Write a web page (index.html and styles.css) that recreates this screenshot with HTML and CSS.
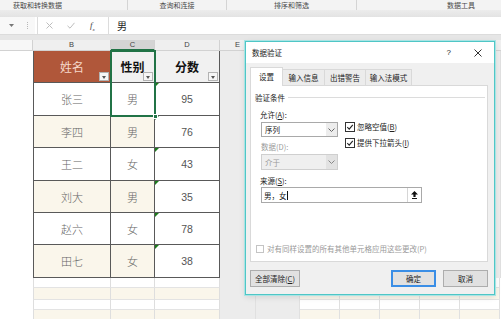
FILE: index.html
```html
<!DOCTYPE html>
<html lang="zh">
<head>
<meta charset="utf-8">
<title>数据验证</title>
<link rel="stylesheet" href="styles.css">
</head>
<body>
<div class="app">
  <div class="ribbon">
    <div class="grp g1">获取和转换数据</div>
    <div class="grp g2">查询和连接</div>
    <div class="grp g3">排序和筛选</div>
    <div class="grp g4">数据工具</div>
  </div>
  <div class="band"></div>
  <div class="fbar">
    <div class="fb-left">
      <svg class="nb-arrow" width="5" height="3" viewBox="0 0 5 3"><polygon points="0,0 5,0 2.5,3" fill="#777"/></svg>
      <span class="dots"></span>
    </div>
    <div class="fb-btns">
      <svg width="7" height="7" viewBox="0 0 7 7"><path d="M0.5 0.5L6.5 6.5M6.5 0.5L0.5 6.5" stroke="#bdbdbd" stroke-width="1" fill="none"/></svg>
      <svg width="8" height="7" viewBox="0 0 8 7"><polyline points="0.5,3.8 3,6.2 7.5,0.8" stroke="#bdbdbd" stroke-width="1" fill="none"/></svg>
      <span class="fx">f<sub>x</sub></span>
    </div>
    <div class="fb-input">男</div>
  </div>
  <div class="gap"></div>
  <div class="sheet">
    <div class="colhdr">
      <div class="c ca"></div>
      <div class="c cb">B</div>
      <div class="c cc sel">C</div>
      <div class="c cd">D</div>
      <div class="c ce">E</div>
      <div class="c cg"></div>
      <div class="c cr"></div>
    </div>

    <div class="row h32">
      <div class="c ca"></div>
      <div class="c cb t hb">姓名<span class="flt"></span></div>
      <div class="c cc t hc">性别<span class="flt"></span></div>
      <div class="c cd t hc">分数<span class="flt"></span></div>
      <div class="c ce gray"></div><div class="c cg gray"></div><div class="c cr gray"></div>
    </div>
    <div class="row h33">
      <div class="c ca"></div>
      <div class="c cb t nm">张三</div>
      <div class="c cc t nm">男</div>
      <div class="c cd t num tri">95</div>
      <div class="c ce gray"></div><div class="c cg gray"></div><div class="c cr gray"></div>
    </div>
    <div class="row h32">
      <div class="c ca"></div>
      <div class="c cb t nm alt">李四</div>
      <div class="c cc t nm alt">男</div>
      <div class="c cd t num tri">76</div>
      <div class="c ce gray"></div><div class="c cg gray"></div><div class="c cr gray"></div>
    </div>
    <div class="row h33">
      <div class="c ca"></div>
      <div class="c cb t nm">王二</div>
      <div class="c cc t nm">女</div>
      <div class="c cd t num tri">43</div>
      <div class="c ce gray"></div><div class="c cg gray"></div><div class="c cr gray"></div>
    </div>
    <div class="row h32">
      <div class="c ca"></div>
      <div class="c cb t nm alt">刘大</div>
      <div class="c cc t nm alt">男</div>
      <div class="c cd t num tri">35</div>
      <div class="c ce gray"></div><div class="c cg gray"></div><div class="c cr gray"></div>
    </div>
    <div class="row h32">
      <div class="c ca"></div>
      <div class="c cb t nm">赵六</div>
      <div class="c cc t nm">女</div>
      <div class="c cd t num tri">78</div>
      <div class="c ce gray"></div><div class="c cg gray"></div><div class="c cr gray"></div>
    </div>
    <div class="row h33">
      <div class="c ca"></div>
      <div class="c cb t nm alt">田七</div>
      <div class="c cc t nm alt">女</div>
      <div class="c cd t num tri">38</div>
      <div class="c ce gray"></div><div class="c cg gray"></div><div class="c cr gray"></div>
    </div>

    <div class="row h10 er">
      <div class="c ca"></div><div class="c cb g"></div><div class="c cc g"></div><div class="c cd g"></div>
      <div class="c ce gray"></div><div class="c cg gray"></div>
      <div class="c cr"><span class="rc"></span><span class="rc"></span><span class="rc"></span><span class="rc"></span><span class="rc"></span></div>
    </div>
    <div class="row h12 er cream">
      <div class="c ca"></div><div class="c cb g"></div><div class="c cc g"></div><div class="c cd g"></div>
      <div class="c ce gray"></div><div class="c cg gray"></div>
      <div class="c cr"><span class="rc"></span><span class="rc"></span><span class="rc"></span><span class="rc"></span><span class="rc"></span></div>
    </div>
    <div class="row h10 er">
      <div class="c ca"></div><div class="c cb g"></div><div class="c cc g"></div><div class="c cd g"></div>
      <div class="c ce gray"></div><div class="c cg gray"></div>
      <div class="c cr"><span class="rc"></span><span class="rc"></span><span class="rc"></span><span class="rc"></span><span class="rc"></span></div>
    </div>
    <div class="row h10 er cream">
      <div class="c ca"></div><div class="c cb g"></div><div class="c cc g"></div><div class="c cd g"></div>
      <div class="c ce gray"></div><div class="c cg gray"></div>
      <div class="c cr"><span class="rc"></span><span class="rc"></span><span class="rc"></span><span class="rc"></span><span class="rc"></span></div>
    </div>

    <div class="selbox"><span class="handle"></span></div>
  </div>

  <div class="dialog">
    <div class="dlg-title">
      <span class="ttl">数据验证</span>
      <span class="q">?</span>
      <svg class="close" width="8" height="8" viewBox="0 0 8 8"><path d="M0.5 0.5L7.5 7.5M7.5 0.5L0.5 7.5" stroke="#333" stroke-width="1" fill="none"/></svg>
    </div>
    <div class="dlg-body">
      <div class="tabs">
        <div class="tab active">设置</div>
        <div class="tab w42">输入信息</div>
        <div class="tab w41">出错警告</div>
        <div class="tab w46">输入法模式</div>
      </div>
      <div class="panel">
        <div class="sec"><span>验证条件</span><span class="rule"></span></div>
        <div class="form">
          <div class="lbl l1">允许(<u>A</u>):</div>
          <div class="row2">
            <div class="col-left">
              <div class="select">
                <span class="sv">序列</span>
                <span class="dd"><svg width="7" height="4" viewBox="0 0 7 4"><polyline points="0.5,0.5 3.5,3.5 6.5,0.5" fill="none" stroke="#666" stroke-width="1"/></svg></span>
              </div>
              <div class="lbl dis l2">数据(D):</div>
              <div class="select disabled">
                <span class="sv">介于</span>
                <span class="dd"><svg width="7" height="4" viewBox="0 0 7 4"><polyline points="0.5,0.5 3.5,3.5 6.5,0.5" fill="none" stroke="#888" stroke-width="1"/></svg></span>
              </div>
            </div>
            <div class="col-right">
              <div class="chk"><span class="box"><svg width="8" height="8" viewBox="0 0 8 8"><polyline points="1.3,4.2 3.2,6.1 6.8,1.8" fill="none" stroke="#222" stroke-width="1.1"/></svg></span>忽略空值(<u>B</u>)</div>
              <div class="chk"><span class="box"><svg width="8" height="8" viewBox="0 0 8 8"><polyline points="1.3,4.2 3.2,6.1 6.8,1.8" fill="none" stroke="#222" stroke-width="1.1"/></svg></span>提供下拉箭头(<u>I</u>)</div>
            </div>
          </div>
          <div class="lbl l3">来源(<u>S</u>):</div>
          <div class="source">
            <span class="val">男，女</span><span class="caret"></span>
            <span class="pick"><svg width="7" height="8" viewBox="0 0 7 8"><polygon points="3.5,0 7,3.5 4.6,3.5 4.6,6 2.4,6 2.4,3.5 0,3.5" fill="#111"/><rect x="1" y="7" width="5" height="1" fill="#111"/></svg></span>
          </div>
        </div>
        <div class="apply"><span class="box dbox"></span>对有同样设置的所有其他单元格应用这些更改(P)</div>
      </div>
      <div class="footer">
        <button class="btn wide">全部清除(<u>C</u>)</button>
        <span class="spacer"></span>
        <button class="btn primary">确定</button>
        <button class="btn">取消</button>
      </div>
    </div>
  </div>
</div>
</body>
</html>
```
FILE: styles.css
```css
* { box-sizing: border-box; margin: 0; padding: 0; }
html, body { width: 501px; height: 319px; overflow: hidden; }
body {
  background: #fff;
  font-family: "Noto Sans CJK SC", "Noto Sans", sans-serif;
  color: #333;
}
.app { position: relative; width: 501px; height: 319px; overflow: hidden; }

/* ribbon group labels */
.ribbon {
  display: flex;
  height: 10px;
  background: #f3f3f3;
  font-size: 7px;
  line-height: 10px;
  color: #4a4a4a;
}
.grp { border-right: 1px solid #d4d4d4; white-space: nowrap; }
.g1 { width: 128px; padding-left: 13px; }
.g2 { width: 99px; text-align: center; }
.g3 { width: 130px; text-align: center; }
.g4 { flex: 1; border-right: none; padding-left: 90px; }
.band { height: 7px; background: linear-gradient(#ececec, #e3e3e3); }

/* formula bar */
.fbar { display: flex; height: 17px; background: #fff; }
.fb-left {
  width: 35px;
  background: #f8f8f8;
  display: flex;
  align-items: center;
  padding-left: 9px;
}
.dots {
  margin-left: 13px;
  width: 1px;
  height: 7px;
  border-left: 1px dotted #b8b8b8;
}
.fb-btns {
  width: 72px;
  margin-left: 2px;
  border-left: 1px solid #dcdcdc;
  border-right: 1px solid #dcdcdc;
  display: flex;
  align-items: center;
  padding-left: 8px;
  gap: 14px;
}
.fx {
  font-family: "Liberation Serif", serif;
  font-style: italic;
  font-size: 9px;
  color: #444;
  margin-left: 1px;
}
.fx sub { font-size: 5px; }
.fb-input {
  flex: 1;
  font-size: 10px;
  line-height: 17px;
  padding-left: 8px;
  color: #222;
}
.gap { height: 6px; background: #e6e6e6; border-top: 1px solid #dcdcdc; }

/* sheet */
.sheet { position: relative; }
.colhdr, .row { display: flex; }
.c { flex: none; position: relative; }
.ca { width: 33px; }
.cb { width: 78px; }
.cc { width: 44px; }
.cd { width: 65px; }
.ce { width: 36px; }
.cg { width: 44px; }
.cr { flex: 1; display: flex; }

.colhdr {
  height: 11px;
  background: #efefef;
  border-bottom: 1px solid #d2d2d2;
  font-family: "Liberation Sans", sans-serif;
  font-size: 7.5px;
  line-height: 10px;
  color: #444;
  text-align: center;
}
.colhdr .c { border-right: 1px solid #d2d2d2; }
.colhdr .ca { background: #f7f7f7; }
.colhdr .cc.sel { background: #d4d4d4; border-bottom: 2px solid #217346; height: 11px; }
.colhdr .cr { border-right: none; }

.h32 { height: 32px; }
.h33 { height: 33px; }
.h10 { height: 10px; }
.h12 { height: 12px; }

.t {
  border-right: 1px solid #595959;
  border-bottom: 1px solid #595959;
  display: flex;
  align-items: center;
  justify-content: center;
  background: #fff;
}
.cb.t { border-left: 1px solid #595959; }
.hb { background: #b0573a; color: #f6d9cb; font-size: 12px; }
.hc { background: #f1f1f1; color: #111; font-size: 12px; font-weight: bold; }
.nm { font-size: 11px; color: #666; font-weight: 300; }
.num { font-family: "Liberation Sans", sans-serif; font-size: 10.5px; color: #555; }
.alt { background: #faf6eb; }
.gray { background: #ececec; border-right: 1px solid #e0e0e0; }

.flt {
  position: absolute;
  right: 1px;
  bottom: 1px;
  width: 10px;
  height: 9px;
  background: #f6f6f6;
  border: 1px solid #b3b3b3;
}
.flt::after {
  content: "";
  position: absolute;
  left: 2px;
  top: 3px;
  border-left: 2.5px solid transparent;
  border-right: 2.5px solid transparent;
  border-top: 3px solid #555;
}
.tri::before {
  content: "";
  position: absolute;
  left: 0;
  top: 0;
  border-top: 4px solid #1d7a1d;
  border-right: 4px solid transparent;
}

.er .g { border-right: 1px solid #dedede; border-bottom: 1px solid #e3e3e3; }
.er .cb { border-left: 1px solid #dedede; }
.er.cream .g { background: #faf6eb; }
.rc { width: 40px; border-right: 1px solid #e0e0e0; border-bottom: 1px solid #e3e3e3; }
.er.cream .rc { background: #faf6eb; }
.er .cr { background: #fff; }

.selbox {
  position: absolute;
  left: 110px;
  top: 10px;
  width: 46px;
  height: 67px;
  border: 2px solid #217346;
}
.handle {
  position: absolute;
  right: -4px;
  bottom: -4px;
  width: 5px;
  height: 5px;
  background: #217346;
  border: 1px solid #fff;
}

/* dialog */
.dialog {
  position: absolute;
  left: 245px;
  top: 41px;
  width: 250px;
  height: 254px;
  border: 1px solid #4fc6c6;
  box-shadow: 0 0 0 1px #a9e4e4, 0 2px 6px rgba(0,0,0,0.12);
  background: #f0f0f0;
  display: flex;
  flex-direction: column;
  font-size: 7.5px;
  color: #222;
}
.dlg-title {
  height: 21px;
  background: #fff;
  display: flex;
  align-items: center;
  padding-left: 6px;
}
.ttl { flex: 1; }
.q { font-family: "Liberation Sans", sans-serif; font-size: 8px; margin-right: 23px; }
.close { margin-right: 12px; }
.dlg-body { flex: 1; display: flex; flex-direction: column; padding: 4px 6px 0 4px; }
.tabs { display: flex; align-items: flex-end; height: 18px; }
.tab {
  height: 16px;
  line-height: 15px;
  text-align: center;
  border: 1px solid #d9d9d9;
  border-bottom: none;
  border-left: none;
  background: #ececec;
  color: #222;
}
.tab.active {
  width: 33px;
  line-height: 18px;
  background: #fff;
  border-left: 1px solid #d9d9d9;
  position: relative;
  z-index: 1;
  margin-bottom: -1px;
  height: 19px;
}
.w42 { width: 42px; }
.w41 { width: 41px; }
.w46 { width: 46px; }

.panel {
  height: 177px;
  background: #fff;
  border: 1px solid #d9d9d9;
  display: flex;
  flex-direction: column;
  padding: 7px 0 8px 4px;
}
.sec { display: flex; align-items: center; height: 9px; line-height: 9px; }
.rule { flex: 1; height: 1px; background: #dcdcdc; margin: 0 2px 0 3px; }
.form { padding-left: 5px; }
.lbl { height: 9px; line-height: 9px; }
.l1 { margin-top: 8px; }
.l2 { margin-top: 5px; }
.l3 { margin-top: 6px; }
.dis { color: #9a9a9a; }
.row2 { display: flex; margin-top: 3px; }
.col-left { width: 77px; margin-left: 1px; }
.select {
  height: 15px;
  border: 1px solid #a9a9a9;
  background: #fff;
  display: flex;
  align-items: center;
}
.select .sv { flex: 1; padding-left: 3px; }
.select .dd {
  width: 11px;
  height: 100%;
  display: flex;
  align-items: center;
  justify-content: center;
  background: #ededed;
}
.select.disabled { height: 16px; margin-top: 3px; background: #efefef; border-color: #cfcfcf; color: #9a9a9a; }
.select.disabled .dd { background: #e2e2e2; }
.col-right { margin-left: 7px; display: flex; flex-direction: column; gap: 6px; }
.chk { display: flex; align-items: center; height: 10px; line-height: 10px; white-space: nowrap; }
.box {
  width: 10px;
  height: 10px;
  border: 1px solid #333;
  background: #fff;
  display: flex;
  align-items: center;
  justify-content: center;
  margin-right: 2px;
}
.source {
  width: 161px;
  height: 16px;
  margin-left: 1px;
  margin-top: 2px;
  border: 1px solid #a9a9a9;
  display: flex;
  align-items: center;
  padding-left: 2px;
}
.caret { width: 1px; height: 9px; background: #111; }
.pick {
  margin-left: auto;
  width: 14px;
  height: 100%;
  border-left: 1px solid #d6d6d6;
  display: flex;
  align-items: center;
  justify-content: center;
}
.apply {
  margin-top: auto;
  margin-left: 1px;
  display: flex;
  align-items: center;
  height: 9px;
  line-height: 9px;
  color: #9a9a9a;
  white-space: nowrap;
}
.dbox { width: 8px; height: 8px; border-color: #c4c4c4; margin-right: 3px; }

.footer { display: flex; padding-top: 8px; }
.btn {
  width: 45px;
  height: 17px;
  border: 1px solid #adadad;
  background: #e1e1e1;
  font-family: inherit;
  font-size: 7.5px;
  color: #222;
}
.btn.wide { width: 50px; }
.btn.primary { border: 2px solid #3a8ee6; margin-right: 7px; }
.spacer { flex: 1; }
```
